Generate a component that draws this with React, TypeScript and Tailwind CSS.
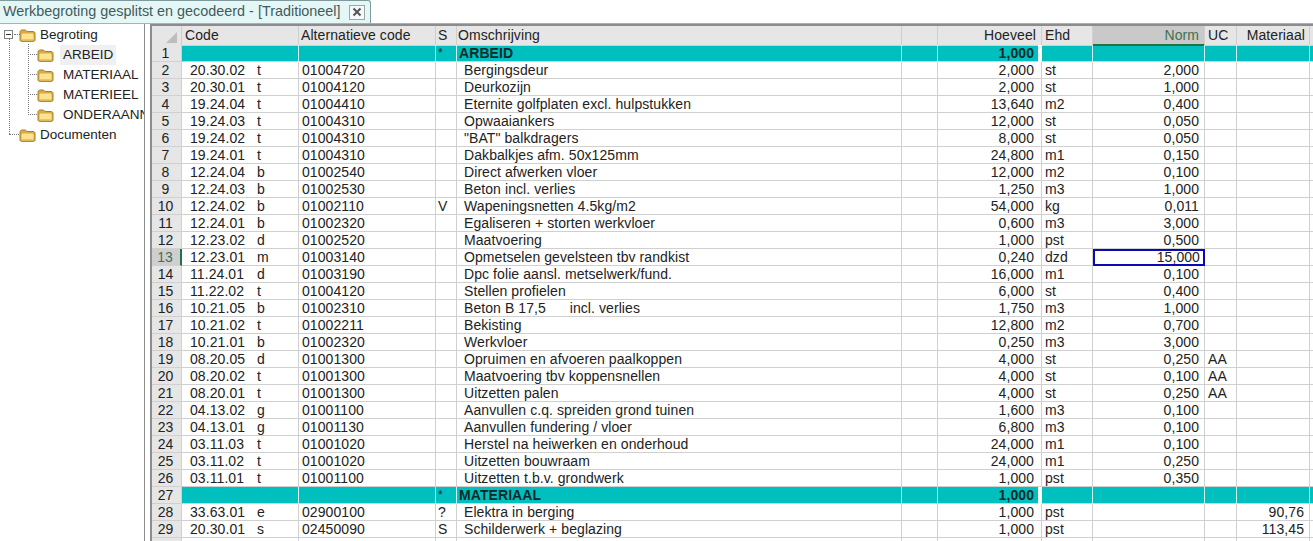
const rows: string[][] = [
  ['', '', '', '*', 'ARBEID', '1,000', '', '', '', ''],
  ['20.30.02', 't', '01004720', '', 'Bergingsdeur', '2,000', 'st', '2,000', '', ''],
  ['20.30.01', 't', '01004120', '', 'Deurkozijn', '2,000', 'st', '1,000', '', ''],
  ['19.24.04', 't', '01004410', '', 'Eternite golfplaten excl. hulpstukken', '13,640', 'm2', '0,400', '', ''],
  ['19.24.03', 't', '01004310', '', 'Opwaaiankers', '12,000', 'st', '0,050', '', ''],
  ['19.24.02', 't', '01004310', '', '"BAT" balkdragers', '8,000', 'st', '0,050', '', ''],
  ['19.24.01', 't', '01004310', '', 'Dakbalkjes afm. 50x125mm', '24,800', 'm1', '0,150', '', ''],
  ['12.24.04', 'b', '01002540', '', 'Direct afwerken vloer', '12,000', 'm2', '0,100', '', ''],
  ['12.24.03', 'b', '01002530', '', 'Beton incl. verlies', '1,250', 'm3', '1,000', '', ''],
  ['12.24.02', 'b', '01002110', 'V', 'Wapeningsnetten 4.5kg/m2', '54,000', 'kg', '0,011', '', ''],
  ['12.24.01', 'b', '01002320', '', 'Egaliseren + storten werkvloer', '0,600', 'm3', '3,000', '', ''],
  ['12.23.02', 'd', '01002520', '', 'Maatvoering', '1,000', 'pst', '0,500', '', ''],
  ['12.23.01', 'm', '01003140', '', 'Opmetselen gevelsteen tbv randkist', '0,240', 'dzd', '15,000', '', ''],
  ['11.24.01', 'd', '01003190', '', 'Dpc folie aansl. metselwerk/fund.', '16,000', 'm1', '0,100', '', ''],
  ['11.22.02', 't', '01004120', '', 'Stellen profielen', '6,000', 'st', '0,400', '', ''],
  ['10.21.05', 'b', '01002310', '', 'Beton B 17,5      incl. verlies', '1,750', 'm3', '1,000', '', ''],
  ['10.21.02', 't', '01002211', '', 'Bekisting', '12,800', 'm2', '0,700', '', ''],
  ['10.21.01', 'b', '01002320', '', 'Werkvloer', '0,250', 'm3', '3,000', '', ''],
  ['08.20.05', 'd', '01001300', '', 'Opruimen en afvoeren paalkoppen', '4,000', 'st', '0,250', 'AA', ''],
  ['08.20.02', 't', '01001300', '', 'Maatvoering tbv koppensnellen', '4,000', 'st', '0,100', 'AA', ''],
  ['08.20.01', 't', '01001300', '', 'Uitzetten palen', '4,000', 'st', '0,250', 'AA', ''],
  ['04.13.02', 'g', '01001100', '', 'Aanvullen c.q. spreiden grond tuinen', '1,600', 'm3', '0,100', '', ''],
  ['04.13.01', 'g', '01001130', '', 'Aanvullen fundering / vloer', '6,800', 'm3', '0,100', '', ''],
  ['03.11.03', 't', '01001020', '', 'Herstel na heiwerken en onderhoud', '24,000', 'm1', '0,100', '', ''],
  ['03.11.02', 't', '01001020', '', 'Uitzetten bouwraam', '24,000', 'm1', '0,250', '', ''],
  ['03.11.01', 't', '01001100', '', 'Uitzetten t.b.v. grondwerk', '1,000', 'pst', '0,350', '', ''],
  ['', '', '', '*', 'MATERIAAL', '1,000', '', '', '', ''],
  ['33.63.01', 'e', '02900100', '?', 'Elektra in berging', '1,000', 'pst', '', '', '90,76'],
  ['20.30.01', 's', '02450090', 'S', 'Schilderwerk + beglazing', '1,000', 'pst', '', '', '113,45'],
]

const cols = 'grid grid-cols-[30px_117px_137px_21px_445px_36px_104px_51px_112px_32px_73px_3px]'

function Folder() {
  return (
    <svg width="17" height="13" viewBox="0 0 17 13" className="shrink-0">
      <path d="M1 11V3.200C1 2 1.800 1 3 1h3.500l1.500 1.500h6c1.200 0 2 .8 2 2V11c0 .8-.7 1.400-1.500 1.400h-12C1.700 12.400 1 11.800 1 11z" fill="#d9aa45" stroke="#a5822f" />
      <path d="M2.500 6c0-.8.6-1.400 1.400-1.400h9.400c.8 0 1.300.6 1.300 1.400v4.500c0 .4-.3.7-.7.700H3.200c-.4 0-.7-.3-.7-.7z" fill="#fbe390" />
      <path d="M2.500 10h12v1.200h-12z" fill="#efc35e" />
    </svg>
  )
}

function TreeItem({ label, selected, child }: { label: string; selected?: boolean; child?: boolean }) {
  return (
    <div className={`flex h-5 items-center ${child ? 'pl-[37px]' : 'pl-[19px]'}`}>
      <Folder />
      <span className={`${child ? 'ml-[6px]' : 'ml-[1px]'} px-[3px] leading-5 whitespace-nowrap ${selected ? 'bg-[#f0f0f0]' : ''}`}>{label}</span>
    </div>
  )
}

export default function App() {
  return (
    <div className="h-[541px] w-[1313px] overflow-hidden bg-white text-[14px] tracking-[0.08px] text-[#222] font-['Liberation_Sans',Arial,sans-serif]">
      {/* Tab strip */}
      <div className="flex h-[24px] items-start border-b border-[#9fb4b4] bg-white">
        <div className="flex h-[23px] w-[371px] items-center rounded-tr-[3px] border-t border-r border-[#7f9a9a] bg-[#e5f6f6] pl-[3px] text-[14.400px] tracking-normal text-[#3f5c5c]">
          <span className="whitespace-nowrap">Werkbegroting gesplitst en gecodeerd - [Traditioneel]</span>
          <div className="ml-auto mr-[5px] flex h-[15px] w-[16px] items-center justify-center border border-[#9aa8a8] bg-[#f4f8f8]">
            <svg width="10" height="10" viewBox="0 0 10 10">
              <path d="M1.500 1.500l7 7M8.500 1.500l-7 7" stroke="#555" strokeWidth="2" />
            </svg>
          </div>
        </div>
      </div>

      <div className="flex h-[517px]">
        {/* Tree */}
        <div className="relative h-full w-[145px] shrink-0 overflow-hidden border-r border-[#8c8c8c] pt-[1px] text-[13.500px] tracking-normal">
          <div className="absolute left-[9px] top-[14px] h-[96px] border-l border-dotted border-[#777]" />
          <div className="absolute left-[9px] top-[110px] w-[10px] border-t border-dotted border-[#777]" />
          <div className="absolute left-[28px] top-[20px] h-[71px] border-l border-dotted border-[#777]" />
          <div className="absolute left-[28px] top-[30px] w-[9px] border-t border-dotted border-[#777]" />
          <div className="absolute left-[28px] top-[50px] w-[9px] border-t border-dotted border-[#777]" />
          <div className="absolute left-[28px] top-[70px] w-[9px] border-t border-dotted border-[#777]" />
          <div className="absolute left-[28px] top-[90px] w-[9px] border-t border-dotted border-[#777]" />
          <div className="absolute left-[14px] top-[10px] w-[6px] border-t border-dotted border-[#777]" />
          <div className="absolute left-[4px] top-[6px] flex h-[9px] w-[9px] items-center justify-center border border-[#808080] bg-white">
            <div className="h-[1px] w-[5px] bg-[#333]" />
          </div>
          <div className="relative">
            <TreeItem label="Begroting" />
            <TreeItem label="ARBEID" selected child />
            <TreeItem label="MATERIAAL" child />
            <TreeItem label="MATERIEEL" child />
            <TreeItem label="ONDERAANNEMING" child />
            <TreeItem label="Documenten" />
          </div>
        </div>

        {/* Grid */}
        <div className="ml-[5px] h-full flex-1 overflow-hidden border-l-2 border-t-2 border-[#8c8c8c]">
          <div className={`${cols} h-[19px] bg-[#e6e6e6] leading-[18px]`}>
            <div className="flex items-end justify-end border-r border-b border-[#cfcfcf] pr-[4px] pb-[2px]">
              <div className="h-0 w-0 border-b-[11px] border-l-[11px] border-b-[#bdbdbd] border-l-transparent" />
            </div>
            <div className="border-r border-b border-[#cfcfcf] pl-[3px]">Code</div>
            <div className="border-r border-b border-[#cfcfcf] pl-[2px]">Alternatieve code</div>
            <div className="border-r border-b border-[#cfcfcf] pl-[2px]">S</div>
            <div className="border-r border-b border-[#cfcfcf] pl-[1px]">Omschrijving</div>
            <div className="border-r border-b border-[#cfcfcf]" />
            <div className="border-r border-b border-[#cfcfcf] pr-[5px] text-right">Hoeveel</div>
            <div className="border-r border-b border-[#cfcfcf] pl-[3px]">Ehd</div>
            <div className="border-r border-b-2 border-b-[#217346] border-r-[#cfcfcf] bg-[#c9c9c9] pr-[5px] text-right text-[#3f7050]">Norm</div>
            <div className="border-r border-b border-[#cfcfcf] pl-[3px]">UC</div>
            <div className="border-r border-b border-[#cfcfcf] pr-[4px] text-right">Materiaal</div>
            <div className="border-b border-[#cfcfcf]" />
          </div>
          {rows.map((r, i) => {
            const head = r[4] === 'ARBEID' || r[4] === 'MATERIAAL'
            const current = i === 12
            const line = head ? 'border-r border-[#d8f2f2]' : 'border-r border-[#d0d0d0]'
            return (
              <div key={i} className={`${cols} h-[17px] leading-[16px] border-b border-[#d0d0d0] ${head ? 'bg-[#00bfbf]' : ''}`}>
                <div className={`border-b border-[#d0d0d0] pr-[2px] text-center ${current ? 'border-r-2 border-r-[#217346] bg-[#cfcfcf] text-[#3f7050]' : 'border-r border-r-[#d0d0d0] bg-[#e6e6e6]'}`}>
                  {i + 1}
                </div>
                <div className={`${line} flex pl-[8px]`}>
                  <span className="w-[67px]">{r[0]}</span>
                  <span>{r[1]}</span>
                </div>
                <div className={`${line} pl-[3px]`}>{r[2]}</div>
                <div className={`${line} pl-[2px] ${head ? 'text-[12px]' : ''}`}>{r[3]}</div>
                <div className={`${line} whitespace-pre ${head ? 'pl-[2px] font-bold text-[#0a2a2a]' : 'pl-[7px]'}`}>{r[4]}</div>
                <div className={line} />
                <div className={head ? 'border-r-[4px] border-white pr-[4px] text-right font-bold text-[#0a2a2a]' : `${line} pr-[7px] text-right`}>{r[5]}</div>
                <div className={`${line} pl-[3px]`}>{r[6]}</div>
                <div className={current ? 'border-2 border-[#0a0ab4] pr-[3px] text-right leading-[12px]' : `${line} pr-[5px] text-right`}>{r[7]}</div>
                <div className={`${line} pl-[3px]`}>{r[8]}</div>
                <div className={`${line} pr-[5px] text-right`}>{r[9]}</div>
                <div />
              </div>
            )
          })}
          {/* Empty last row, cut off by the window */}
          <div className={`${cols} h-[17px]`}>
            <div className="border-r border-[#d0d0d0] bg-[#e6e6e6]" />
            <div className="border-r border-[#d0d0d0]" />
            <div className="border-r border-[#d0d0d0]" />
            <div className="border-r border-[#d0d0d0]" />
            <div className="border-r border-[#d0d0d0]" />
            <div className="border-r border-[#d0d0d0]" />
            <div className="border-r border-[#d0d0d0]" />
            <div className="border-r border-[#d0d0d0]" />
            <div className="border-r border-[#d0d0d0]" />
            <div className="border-r border-[#d0d0d0]" />
            <div className="border-r border-[#d0d0d0]" />
          </div>
        </div>
      </div>
    </div>
  )
}
